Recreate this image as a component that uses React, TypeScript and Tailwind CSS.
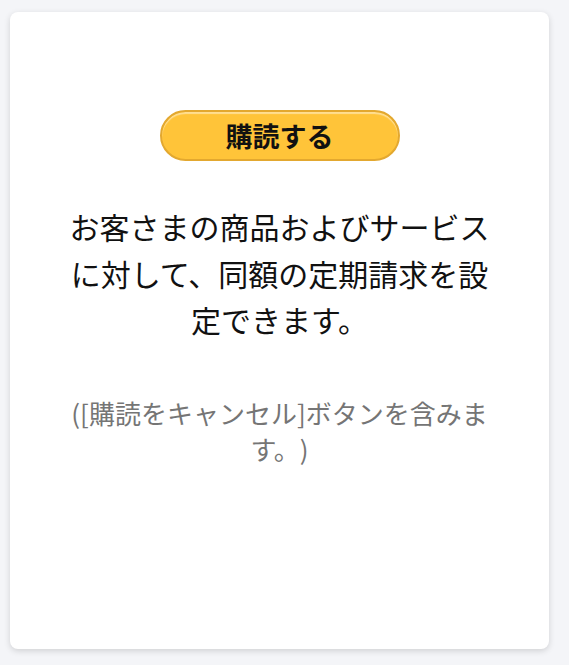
import React from 'react';

const font = { fontFamily: '"Noto Sans CJK JP", "Noto Sans", sans-serif' };

export default function App() {
  return (
    <div className="min-h-[665px] bg-[#f4f5f8] pt-3 pl-[10px]" style={font}>
      <div className="flex h-[637px] w-[539px] flex-col items-center rounded-lg bg-white pt-[98px] shadow-[0_2px_6px_rgba(0,0,0,0.15)]">
        {/* Subscribe button */}
        <button className="flex h-[51px] w-[240px] items-center justify-center rounded-full border-2 border-[#e3a82f] bg-[#ffc439] shadow-[inset_0_2px_1px_rgba(255,255,255,0.45)]">
          <span className="text-[27px] font-bold leading-none text-[#111] [text-spacing-trim:space-all]">購読する</span>
        </button>

        <p className="mt-[42px] w-[440px] text-center text-[30px] leading-[46.5px] text-[#111] [text-spacing-trim:space-all]">
          お客さまの商品およびサービスに対して、同額の定期請求を設定できます。
        </p>

        <p className="mt-[52px] w-[440px] text-center text-[26px] leading-[36px] text-[#757575] [text-spacing-trim:space-all]">
          ([購読をキャンセル]ボタンを含みます。)
        </p>
      </div>
    </div>
  );
}
